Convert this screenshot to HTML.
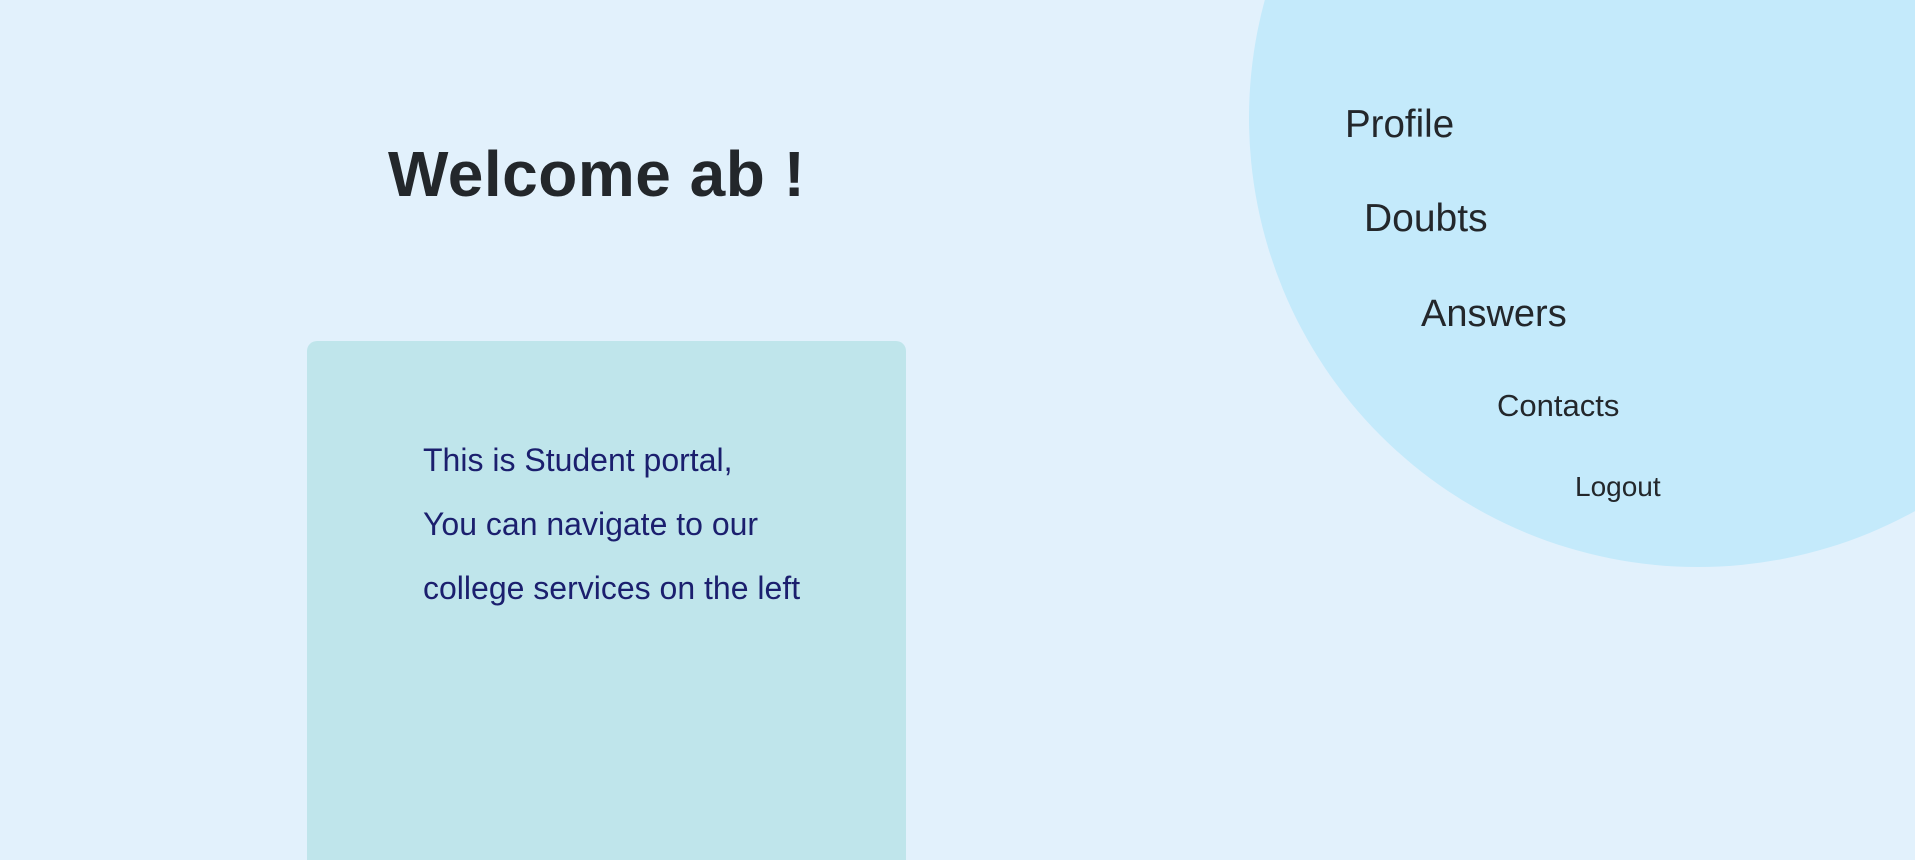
<!DOCTYPE html>
<html><head><meta charset="utf-8"><style>
html,body{margin:0;padding:0;width:1915px;height:860px;overflow:hidden;background:#e2f1fc;font-family:"Liberation Sans",sans-serif;}
.c{position:absolute;left:1249px;top:-331px;width:898px;height:898px;border-radius:50%;background:#c4eafb;}
.t{position:absolute;line-height:1;white-space:nowrap;}
.n{color:#23272b;}
.card{position:absolute;left:307px;top:341px;width:599px;height:519px;background:#bfe5eb;border-radius:10px 10px 0 0;}
.p{color:#1b1f6e;font-size:32px;}
</style></head><body>
<div class="c"></div>
<div class="t" style="left:388px;top:142px;font-size:64px;font-weight:bold;color:#23272b;letter-spacing:0.5px;font-family:'Comic Sans MS','Liberation Sans',sans-serif;">Welcome ab !</div>
<div class="card"></div>
<div class="t p" style="left:423px;top:444px;">This is Student portal,</div>
<div class="t p" style="left:423px;top:508px;">You can navigate to our</div>
<div class="t p" style="left:423px;top:572px;">college services on the left</div>
<div class="t n" style="left:1345px;top:106px;font-size:38.5px;">Profile</div>
<div class="t n" style="left:1364px;top:199px;font-size:39px;">Doubts</div>
<div class="t n" style="left:1421px;top:295px;font-size:38px;">Answers</div>
<div class="t n" style="left:1497px;top:390px;font-size:31px;">Contacts</div>
<div class="t n" style="left:1575px;top:473px;font-size:28px;">Logout</div>
</body></html>
